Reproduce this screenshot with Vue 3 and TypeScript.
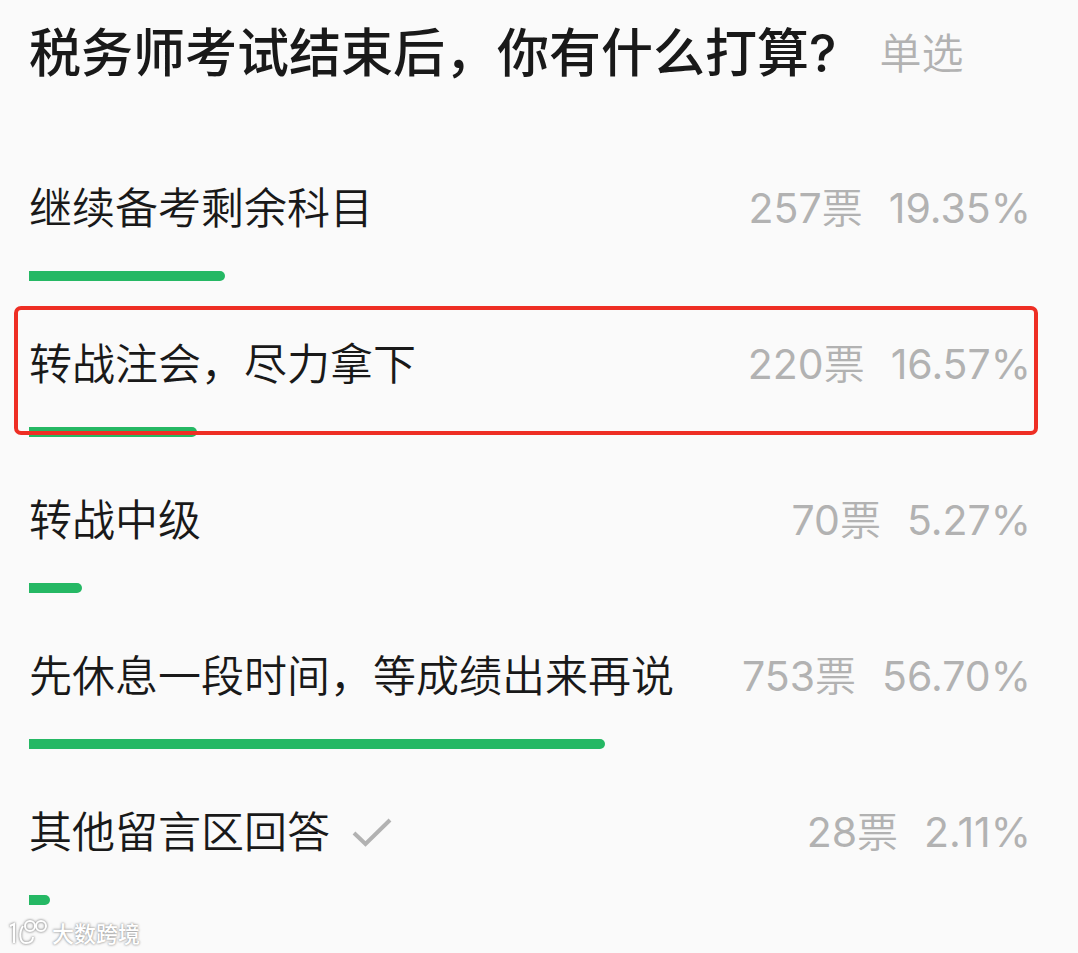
<script setup lang="ts">
interface PollOption {
  label: string
  votes: number
  percent: string
  chosen?: boolean
  marked?: boolean
}

const options: PollOption[] = [
  { label: '继续备考剩余科目', votes: 257, percent: '19.35' },
  { label: '转战注会，尽力拿下', votes: 220, percent: '16.57', marked: true },
  { label: '转战中级', votes: 70, percent: '5.27' },
  { label: '先休息一段时间，等成绩出来再说', votes: 753, percent: '56.70' },
  { label: '其他留言区回答', votes: 28, percent: '2.11', chosen: true },
]
</script>

<template>
  <main class="poll">
    <header class="head">
      <h1 class="title">税务师考试结束后，你有什么打算?</h1>
      <span class="kind">单选</span>
    </header>

    <ul class="options">
      <li v-for="o in options" :key="o.label" class="option" :class="{ marked: o.marked }">
        <div class="row">
          <span class="label">{{ o.label }}</span>
          <svg v-if="o.chosen" class="check" viewBox="0 0 40 30" role="img" aria-label="已选">
            <path d="M2 16 L13.500 27 L38 3" />
          </svg>
          <span class="votes">{{ o.votes }}<span class="unit">票</span></span>
          <span class="percent">{{ o.percent }}%</span>
        </div>
        <div class="bar" :style="{ width: o.percent + '%' }"></div>
      </li>
    </ul>

    <div class="watermark">
      <svg class="logo" viewBox="0 0 40 28" aria-hidden="true">
        <path d="M2 6 L6 4 V23" />
        <path d="M15 6 C11 12 11 23 18 23 C22 23 25 21 25 17" />
        <circle cx="22" cy="6" r="5" />
        <circle cx="33" cy="6" r="5" />
      </svg>
      <span>大数跨境</span>
    </div>
  </main>
</template>

<style>
body {
  margin: 0;
  background: #fafafa;
}
</style>

<style scoped>
.poll {
  position: relative;
  box-sizing: border-box;
  min-height: 100vh;
  padding: 0 34px 0 29px;
  background: #fafafa;
  color: #191919;
  font-family: Inter, "Noto Sans CJK SC", sans-serif;
}
.head {
  display: flex;
  align-items: center;
  gap: 43px;
  height: 108px;
  margin-bottom: 42px;
}
.title {
  margin: 0;
  font-size: 52px;
  line-height: 60px;
  font-weight: 500;
  white-space: nowrap;
}
.kind {
  color: #b2b2b2;
  font-size: 42px;
  line-height: 60px;
  font-weight: 350;
  white-space: nowrap;
}
.options {
  margin: 0;
  padding: 0;
  list-style: none;
}
.option {
  position: relative;
  padding-bottom: 25px;
}
.row {
  display: flex;
  align-items: center;
  height: 116px;
  margin-bottom: 5px;
  padding-right: 13px;
  font-size: 43px;
  line-height: 60px;
  font-weight: 350;
  white-space: nowrap;
}
.check {
  width: 40px;
  height: 30px;
  margin-left: 22px;
  fill: none;
  stroke: #b2b2b2;
  stroke-width: 4;
}
.votes,
.percent {
  color: #b2b2b2;
  font-size: 41px;
  font-weight: 400;
}
.votes {
  margin-left: auto;
}
.unit {
  font-weight: 350;
}
.percent {
  margin-left: 26px;
}
.bar {
  height: 10px;
  border-radius: 0 5px 5px 0;
  background: #25b864;
}
.marked::after {
  content: "";
  position: absolute;
  box-sizing: border-box;
  top: 0;
  bottom: 27px;
  left: -15px;
  right: 6px;
  border: 4px solid #ee2e24;
  border-radius: 7px;
}
.watermark {
  position: absolute;
  left: 8px;
  bottom: 5px;
  display: flex;
  align-items: center;
  gap: 4px;
  color: #ffffff;
  font-size: 22px;
  line-height: 28px;
  font-weight: 500;
  text-shadow: 0 0 2px #999999, 0 0 3px #aaaaaa;
}
.logo {
  width: 40px;
  height: 28px;
  overflow: visible;
  fill: none;
  stroke: #ffffff;
  stroke-width: 2;
  filter: drop-shadow(0 0 1px #999999) drop-shadow(0 0 1px #bbbbbb);
}
</style>
